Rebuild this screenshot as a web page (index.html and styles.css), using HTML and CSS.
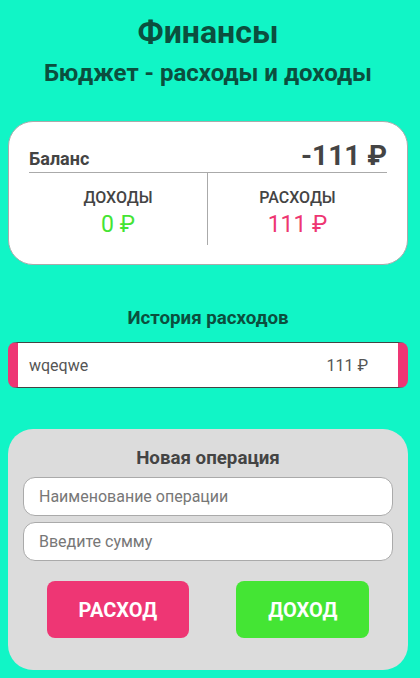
FILE: index.html
```html
<!DOCTYPE html>
<html lang="ru">
<head>
<meta charset="utf-8">
<link rel="stylesheet" href="styles.css">
</head>
<body>
<div class="app">
  <h1 class="title">Финансы</h1>
  <h2 class="subtitle">Бюджет - расходы и доходы</h2>

  <section class="balance-card">
    <div class="balance-row">
      <span class="balance-label">Баланс</span>
      <span class="balance-value">-111 ₽</span>
    </div>
    <div class="totals">
      <div class="total total-income">
        <div class="total-label">ДОХОДЫ</div>
        <div class="total-value income">0 ₽</div>
      </div>
      <div class="total">
        <div class="total-label">РАСХОДЫ</div>
        <div class="total-value expense">111 ₽</div>
      </div>
    </div>
  </section>

  <h3 class="history-title">История расходов</h3>
  <ul class="history">
    <li class="history-item minus">
      <span class="item-name">wqeqwe</span>
      <span class="item-amount">111 ₽</span>
    </li>
  </ul>

  <section class="new-op">
    <h3 class="new-op-title">Новая операция</h3>
    <input class="field" type="text" placeholder="Наименование операции">
    <input class="field" type="text" placeholder="Введите сумму">
    <div class="buttons">
      <button class="btn btn-expense">РАСХОД</button>
      <button class="btn btn-income">ДОХОД</button>
    </div>
  </section>
</div>
</body>
</html>
```

FILE: styles.css
```css
* { box-sizing: border-box; }

html, body {
  background: #11f5c6;
}

body {
  margin: 8px;
  font-family: Roboto, "Noto Sans", sans-serif;
  color: #444;
}

.app {
  width: 400px;
  display: flex;
  flex-direction: column;
}

.title {
  margin: 5px 0 0;
  font-size: 32px;
  line-height: 38px;
  font-weight: 700;
  text-align: center;
  color: #0b4f3e;
}

.subtitle {
  margin: 8px 0 0;
  font-size: 24px;
  line-height: 28px;
  font-weight: 700;
  text-align: center;
  color: #0b4f3e;
}

.balance-card {
  margin-top: 34px;
  background: #fff;
  border: 1px solid #aaa;
  border-radius: 25px;
  padding: 17px 20px 19px;
}

.balance-row {
  display: flex;
  justify-content: space-between;
  align-items: baseline;
  height: 34px;
  border-bottom: 1px solid #aaa;
}

.balance-label {
  font-size: 18px;
  font-weight: 700;
  color: #444;
}

.balance-value {
  font-size: 28px;
  font-weight: 700;
  color: #444;
}

.totals {
  display: grid;
  grid-template-columns: 1fr 1fr;
  height: 72px;
}

.total {
  display: flex;
  flex-direction: column;
  align-items: center;
  padding-top: 15px;
}

.total-income {
  border-right: 1px solid #aaa;
}

.total-label {
  font-size: 16px;
  line-height: 20px;
  font-weight: 500;
  color: #444;
}

.total-value {
  margin-top: 3px;
  font-size: 23px;
  line-height: 28px;
  font-weight: 400;
}

.income { color: #44e434; }
.expense { color: #ee3672; }

.history-title {
  margin: 41px 0 0;
  font-size: 18.72px;
  line-height: 24px;
  font-weight: 700;
  text-align: center;
  color: #0b4f3e;
}

.history {
  list-style: none;
  margin: 12px 0 0;
  padding: 0;
}

.history-item {
  display: flex;
  justify-content: space-between;
  align-items: center;
  height: 46px;
  background: #fff;
  border-top: 1px solid #444;
  border-bottom: 1px solid #444;
  border-left: 10px solid #ee3674;
  border-right: 10px solid #ee3674;
  border-radius: 8px;
  padding: 0 30px 0 11px;
  font-size: 16px;
  color: #555;
}

.new-op {
  margin-top: 41px;
  background: #dcdcdc;
  border-radius: 25px;
  padding: 17px 15px 32px;
  display: flex;
  flex-direction: column;
}

.new-op-title {
  margin: 0;
  font-size: 18.72px;
  line-height: 24px;
  font-weight: 700;
  text-align: center;
  color: #444;
}

.field {
  height: 39px;
  margin-top: 7px;
  border: 1px solid #aaa;
  border-radius: 12px;
  background: #fff;
  padding: 0 15px;
  font-family: Roboto, "Noto Sans", sans-serif;
  font-size: 16px;
  color: #444;
  outline: none;
}

.field + .field { margin-top: 6px; }

.field::placeholder { color: #777; }

.buttons {
  display: flex;
  justify-content: space-around;
  margin-top: 20px;
}

.btn {
  height: 57px;
  border: none;
  border-radius: 8px;
  padding: 0 32px;
  font-family: Roboto, "Noto Sans", sans-serif;
  font-size: 20px;
  font-weight: 700;
  color: #fff;
}

.btn-expense { background: #ee3674; }
.btn-income { background: #44e534; }
```
